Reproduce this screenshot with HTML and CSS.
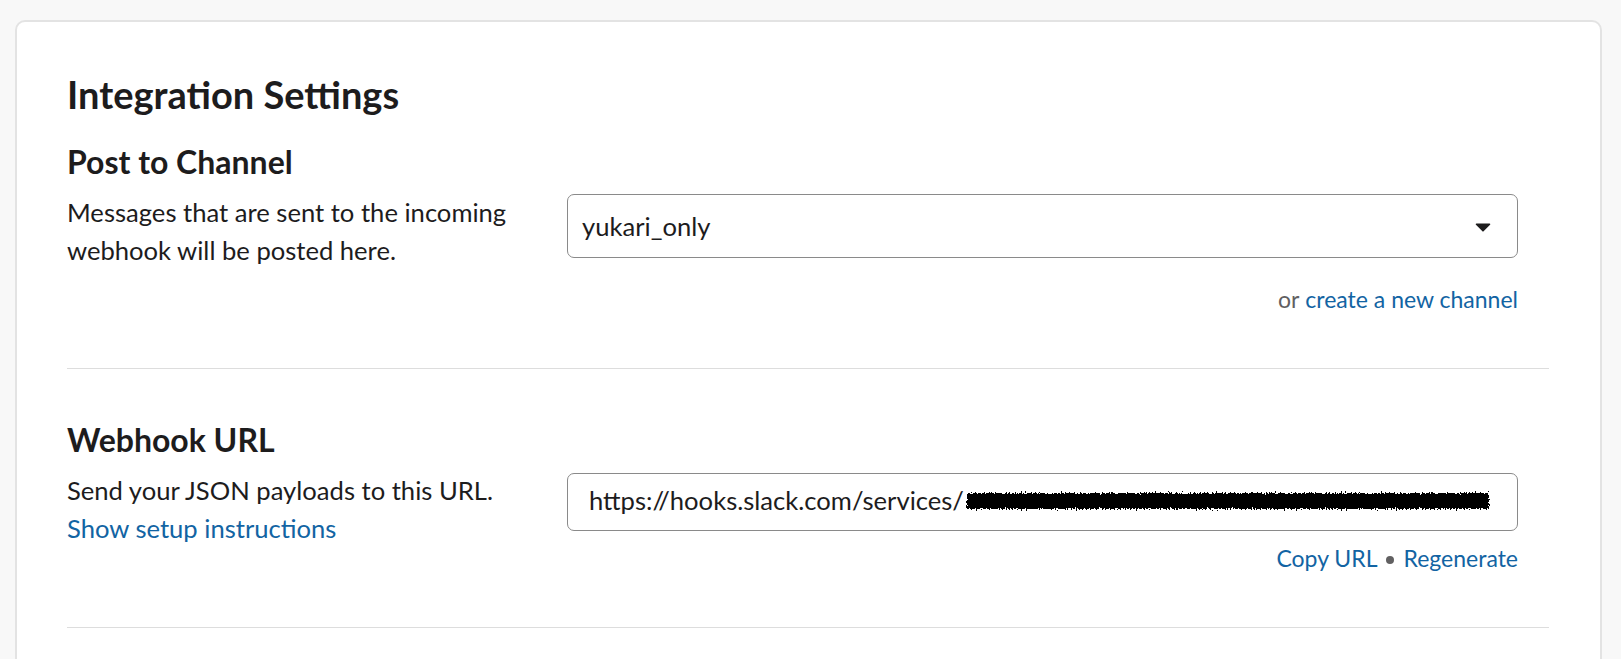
FILE: index.html
```html
<!DOCTYPE html>
<html lang="en">
<head>
<meta charset="utf-8">
<title>Integration Settings</title>
<link rel="stylesheet" href="styles.css">
</head>
<body>
<div class="card">
  <h1 class="title">Integration Settings</h1>

  <section class="setting">
    <h2 class="setting-title">Post to Channel</h2>
    <div class="row">
      <p class="desc">Messages that are sent to the incoming webhook will be posted here.</p>
      <div class="control">
        <div class="select-box">
          <span class="field-text">yukari_only</span>
          <svg class="caret" width="16" height="9" viewBox="0 0 16 9" aria-hidden="true">
            <polygon points="1.5,1.2 14.5,1.2 8,7.8" fill="#1d1c1d" stroke="#1d1c1d" stroke-width="1.6" stroke-linejoin="round"/>
          </svg>
        </div>
        <div class="hint hint-first"><span class="muted">or</span> <a class="link" href="#">create a new channel</a></div>
      </div>
    </div>
  </section>

  <section class="setting bordered">
    <h2 class="setting-title">Webhook URL</h2>
    <div class="row">
      <div class="desc">
        <div>Send your JSON payloads to this URL.</div>
        <a class="link" href="#">Show setup instructions</a>
      </div>
      <div class="control">
        <div class="url-box">
          <span class="field-text">https://hooks.slack.com/services/</span>
          <svg class="redact" width="530" height="28" viewBox="0 0 530 28" aria-hidden="true">
            <defs>
              <filter id="rough" x="-2%" y="-60%" width="104%" height="220%">
                <feTurbulence type="fractalNoise" baseFrequency="0.8 0.35" numOctaves="2" seed="7" result="noise"/>
                <feDisplacementMap in="SourceGraphic" in2="noise" scale="6" xChannelSelector="R" yChannelSelector="G"/>
              </filter>
            </defs>
            <rect x="3" y="6" width="522" height="16" fill="#000" filter="url(#rough)"/>
            <rect x="6" y="9" width="517" height="11" fill="#000"/>
          </svg>
        </div>
        <div class="hint hint-second"><a class="link" href="#">Copy URL</a><span class="dot"></span><a class="link" href="#">Regenerate</a></div>
      </div>
    </div>
  </section>

  <section class="setting bordered filler"></section>
</div>
</body>
</html>
```

FILE: styles.css
```css
html {
  overflow: hidden;
}

body {
  margin: 0;
  padding: 20px 19px 0 15px;
  background: #f8f8f8;
  font-family: Lato, "Noto Sans", "Liberation Sans", sans-serif;
  color: #1d1c1d;
}

.card {
  background: #ffffff;
  border: 2px solid #e3e3e3;
  border-radius: 10px;
  padding: 50px 51px 0 50px;
}

.title {
  margin: 0;
  font-size: 38px;
  line-height: 44px;
  font-weight: 700;
}

.setting {
  padding: 27px 0 51px 0;
}

.setting.bordered {
  border-top: 1px solid #dddddd;
  padding-top: 52px;
}

.setting.filler {
  padding: 0;
  height: 80px;
}

.setting-title {
  margin: 0;
  font-size: 32px;
  line-height: 38px;
  font-weight: 700;
}

.row {
  display: grid;
  grid-template-columns: 500px minmax(0, 1fr);
  margin-top: 12px;
  padding-right: 31px;
}

.desc {
  margin: 0;
  font-size: 25.6px;
  line-height: 38px;
  padding-right: 20px;
}

.control {
  display: flex;
  flex-direction: column;
  min-width: 0;
}

.select-box {
  margin-top: 1px;
  height: 64px;
  box-sizing: border-box;
  border: 1px solid #8a8a8a;
  border-radius: 7px;
  display: flex;
  align-items: center;
  justify-content: space-between;
  padding: 0 26px 0 14px;
}

.url-box {
  margin-top: 2px;
  height: 58px;
  box-sizing: border-box;
  border: 1px solid #8a8a8a;
  border-radius: 7px;
  display: flex;
  align-items: center;
  padding: 0 0 4px 21px;
  overflow: hidden;
}

.field-text {
  font-size: 25.6px;
  line-height: 38px;
  white-space: nowrap;
}

.caret {
  display: block;
  margin-top: 2px;
}

.redact {
  display: block;
  margin-top: 2px;
  flex-shrink: 0;
}

.hint {
  font-size: 23px;
  line-height: 35px;
  display: flex;
  justify-content: flex-end;
  align-items: center;
  gap: 6px;
}

.hint-first {
  margin-top: 24px;
}

.hint-second {
  margin-top: 10px;
  gap: 9px;
}

.muted {
  color: #616061;
}

.link {
  color: #1264a3;
  text-decoration: none;
}

.dot {
  width: 8px;
  height: 8px;
  border-radius: 50%;
  background: #616061;
  margin-top: 2px;
}
```
